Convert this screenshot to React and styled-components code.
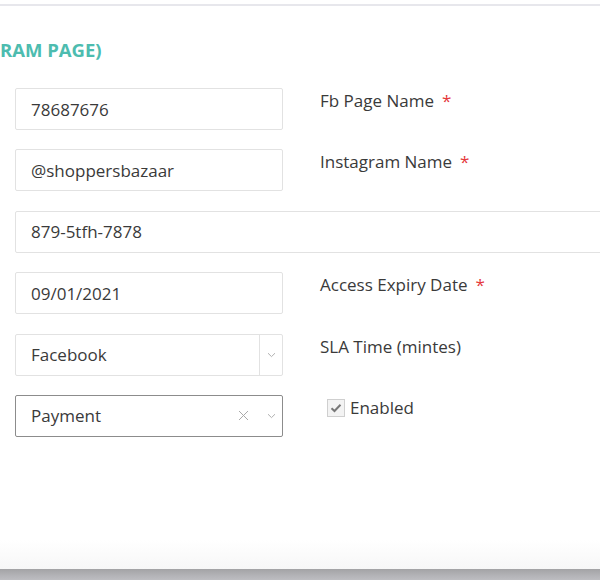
import React from 'react'
import styled, { createGlobalStyle } from 'styled-components'

const GlobalStyle = createGlobalStyle`
  html, body {
    margin: 0;
    padding: 0;
    background: #ffffff;
    overflow: hidden;
  }
  body {
    font-family: "Open Sans", "Noto Sans", "Liberation Sans", sans-serif;
    color: #333;
  }
`

const Page = styled.div`
  width: 600px;
  height: 580px;
  display: flex;
  flex-direction: column;
  overflow: hidden;
  background: #fff;
`

const TopRule = styled.div`
  margin-top: 4px;
  height: 2px;
  background: #e7e7ec;
`

const Title = styled.h2`
  margin: 32px 0 0 0;
  font-size: 18.5px;
  line-height: 23px;
  font-weight: 700;
  color: #4dbcaf;
  white-space: nowrap;
`

const Form = styled.div`
  margin-top: 27px;
  padding-left: 15px;
  width: 720px;
  display: grid;
  grid-template-columns: 268px 1fr;
  grid-auto-rows: 42px;
  column-gap: 37px;
  row-gap: 19.4px;
`

const Box = styled.div`
  box-sizing: border-box;
  height: 42px;
  display: flex;
  align-items: center;
  border: 1px solid ${p => (p.$focused ? '#8c8c8c' : '#e2e2e2')};
  border-radius: 2px;
  background: #fff;
  grid-column: ${p => (p.$wide ? '1 / span 2' : 'auto')};
`

const Value = styled.span`
  flex: 1;
  padding-left: 15px;
  font-size: 17px;
  color: #3a3a3a;
  white-space: nowrap;
`

const Indicator = styled.span`
  width: 22px;
  height: 100%;
  display: flex;
  align-items: center;
  justify-content: center;
  border-left: ${p => (p.$split ? '1px solid #e2e2e2' : 'none')};
`

const ClearIcon = styled.span`
  width: 20px;
  height: 100%;
  display: flex;
  align-items: center;
  justify-content: center;
  margin-right: 7px;
`

const Label = styled.div`
  padding-top: 1px;
  font-size: 17px;
  line-height: 24px;
  color: #3a3a3a;
  white-space: nowrap;
`

const Required = styled.span`
  color: #e5383b;
  margin-left: 8px;
`

const CheckRow = styled.label`
  display: flex;
  align-items: center;
  gap: 5px;
  padding: 1px 0 0 7px;
  height: 24px;
  font-size: 17px;
  color: #3a3a3a;
`

const CheckBox = styled.span`
  box-sizing: border-box;
  width: 18px;
  height: 18px;
  border: 1px solid #cfcfcf;
  background: #f3f3f3;
  display: flex;
  align-items: center;
  justify-content: center;
`

const Spacer = styled.div`
  flex: 1;
  background: linear-gradient(to bottom, #ffffff 0%, #ffffff 78%, #f7f7f7 100%);
`

const BottomBar = styled.div`
  height: 11px;
  background: linear-gradient(to bottom, #a3a3a5 0%, #b3b3b7 60%, #bdbdc1 100%);
`

const Chevron = () => (
  <svg width="9" height="6" viewBox="0 0 9 6">
    <path d="M1 1.2 L4.5 4.6 L8 1.2" fill="none" stroke="#b0b0b0" strokeWidth="1" />
  </svg>
)

const Cross = () => (
  <svg width="11" height="11" viewBox="0 0 11 11">
    <path d="M1 1 L10 10 M10 1 L1 10" fill="none" stroke="#aaaaaa" strokeWidth="1" />
  </svg>
)

const Check = () => (
  <svg width="12" height="10" viewBox="0 0 12 10">
    <path d="M1.5 5.2 L4.5 8 L10.5 1.8" fill="none" stroke="#777" strokeWidth="2" />
  </svg>
)

const App = () => {
  return (
    <>
      <GlobalStyle />
      <Page>
        <TopRule />
        <Title>RAM PAGE)</Title>
        <Form>
          <Box>
            <Value>78687676</Value>
          </Box>
          <Label>
            Fb Page Name<Required>*</Required>
          </Label>

          <Box>
            <Value>@shoppersbazaar</Value>
          </Box>
          <Label>
            Instagram Name<Required>*</Required>
          </Label>

          <Box $wide>
            <Value>879-5tfh-7878</Value>
          </Box>

          <Box>
            <Value>09/01/2021</Value>
          </Box>
          <Label>
            Access Expiry Date<Required>*</Required>
          </Label>

          <Box>
            <Value>Facebook</Value>
            <Indicator $split>
              <Chevron />
            </Indicator>
          </Box>
          <Label>SLA Time (mintes)</Label>

          <Box $focused>
            <Value>Payment</Value>
            <ClearIcon>
              <Cross />
            </ClearIcon>
            <Indicator>
              <Chevron />
            </Indicator>
          </Box>
          <CheckRow>
            <CheckBox>
              <Check />
            </CheckBox>
            Enabled
          </CheckRow>
        </Form>
        <Spacer />
        <BottomBar />
      </Page>
    </>
  )
}

export default App
